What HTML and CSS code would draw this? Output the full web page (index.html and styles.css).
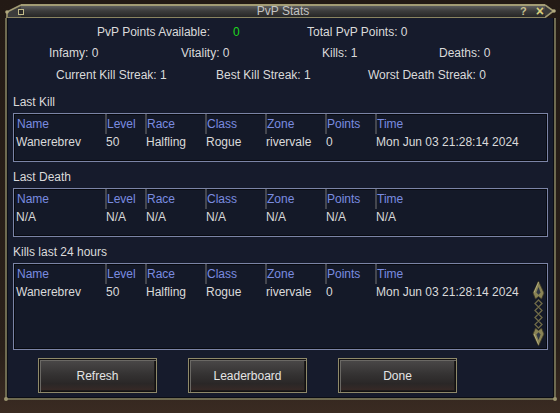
FILE: index.html
```html
<!DOCTYPE html>
<html lang="en">

<head>
    <meta charset="UTF-8">
    <meta name="viewport" content="width=device-width, initial-scale=1.0">
    <title>PvP Stats</title>
    <link rel="stylesheet" href="styles.css">
</head>

<body>
    <div class="window">
        <div class="titlebar">
            <svg class="cap" width="16" height="14" viewBox="0 0 16 14">
                <polygon points="16,1.5 3,8 3,14 16,14" fill="#3c3c3c" />
                <polyline points="16,1 2,8 2,14" fill="none" stroke="#a39c74" stroke-width="1.6" />
                <line x1="3" y1="13.5" x2="16" y2="13.5" stroke="#8a8462" stroke-width="1" />
                <circle cx="2" cy="8" r="1.8" fill="#b3ab80" />
            </svg>
            <div class="bar">
                <span class="knob"></span>
                <span class="title">PvP Stats</span>
                <span class="help">?</span>
                <span class="close">&times;</span>
            </div>
            <svg class="cap" width="11" height="14" viewBox="0 0 11 14">
                <polygon points="0,1.5 8,7 0,13" fill="#3a3a3a" />
                <polyline points="0,1 8.5,7 0,13.5" fill="none" stroke="#a39c74" stroke-width="1.6" />
                <circle cx="9" cy="7" r="1.8" fill="#b3ab80" />
            </svg>
        </div>

        <div class="panel">
            <div class="summary">
                <div class="stat-row row-1">
                    <span class="w136">PvP Points Available:</span>
                    <span class="w74 green">0</span>
                    <span>Total PvP Points: 0</span>
                </div>
                <div class="stat-row row-2">
                    <span class="w132">Infamy: 0</span>
                    <span class="w141">Vitality: 0</span>
                    <span class="w117">Kills: 1</span>
                    <span>Deaths: 0</span>
                </div>
                <div class="stat-row row-3">
                    <span class="w160">Current Kill Streak: 1</span>
                    <span class="w152">Best Kill Streak: 1</span>
                    <span>Worst Death Streak: 0</span>
                </div>
            </div>

            <div class="section">
                <div class="section-label">Last Kill</div>
                <div class="list">
                    <div class="list-table">
                        <div class="list-head">
                            <span>Name</span><span>Level</span><span>Race</span><span>Class</span><span>Zone</span><span>Points</span><span>Time</span>
                        </div>
                        <div class="list-row">
                            <span>Wanerebrev</span><span>50</span><span>Halfling</span><span>Rogue</span><span>rivervale</span><span>0</span><span>Mon Jun 03 21:28:14 2024</span>
                        </div>
                    </div>
                </div>
            </div>

            <div class="section">
                <div class="section-label">Last Death</div>
                <div class="list">
                    <div class="list-table">
                        <div class="list-head">
                            <span>Name</span><span>Level</span><span>Race</span><span>Class</span><span>Zone</span><span>Points</span><span>Time</span>
                        </div>
                        <div class="list-row">
                            <span>N/A</span><span>N/A</span><span>N/A</span><span>N/A</span><span>N/A</span><span>N/A</span><span>N/A</span>
                        </div>
                    </div>
                </div>
            </div>

            <div class="section">
                <div class="section-label">Kills last 24 hours</div>
                <div class="list list-tall">
                    <div class="list-table">
                        <div class="list-head">
                            <span>Name</span><span>Level</span><span>Race</span><span>Class</span><span>Zone</span><span>Points</span><span>Time</span>
                        </div>
                        <div class="list-row">
                            <span>Wanerebrev</span><span>50</span><span>Halfling</span><span>Rogue</span><span>rivervale</span><span>0</span><span>Mon Jun 03 21:28:14 2024</span>
                        </div>
                    </div>
                    <div class="scroll">
                        <svg width="13" height="65" viewBox="0 0 13 65">
                            <!-- up arrow -->
                            <polygon points="6.5,0 12,12 9.5,18 6.5,15.5 3.5,18 1,12" fill="#8a8456" stroke="#3e3a26" stroke-width="0.8" />
                            <polygon points="6.5,6 8.6,11.5 6.5,13.8 4.4,11.5" fill="#2f3744" />
                            <line x1="6.5" y1="1" x2="2" y2="11.5" stroke="#c2bb8a" stroke-width="0.8" />
                            <!-- chain -->
                            <path d="M6.5,19 L10,22.5 L6.5,26 L3,22.5 Z M6.5,26 L10,29.5 L6.5,33 L3,29.5 Z M6.5,33 L10,36.5 L6.5,40 L3,36.5 Z M6.5,40 L10,43.5 L6.5,47 L3,43.5 Z" fill="none" stroke="#6f6a48" stroke-width="1.3" />
                            <!-- down arrow -->
                            <polygon points="6.5,65 12,53 9.5,47 6.5,49.5 3.5,47 1,53" fill="#8a8456" stroke="#3e3a26" stroke-width="0.8" />
                            <polygon points="6.5,59 8.6,53.5 6.5,51.2 4.4,53.5" fill="#2f3744" />
                            <line x1="2" y1="53" x2="6.5" y2="63.5" stroke="#c2bb8a" stroke-width="0.8" />
                        </svg>
                    </div>
                </div>
            </div>

            <div class="buttons">
                <button class="btn">Refresh</button>
                <button class="btn">Leaderboard</button>
                <button class="btn">Done</button>
            </div>
        </div>
    </div>
</body>

</html>
```

FILE: styles.css
```css
:root {
    --gold: #a39c74;
    --gold-dark: #6e6a50;
    --panel: #161b2c;
    --text: #dadada;
    --header: #7a8ce0;
}

body {
    margin: 0;
    height: 413px;
    overflow: hidden;
    font-family: 'Liberation Sans', Arial, sans-serif;
    font-size: 12px;
    color: var(--text);
    background: linear-gradient(#231a15, #2a201a 85%, #3a2b22);
}

.window {
    width: 551px;
    margin: 4px 0 0 5px;
}

/* title bar */
.titlebar {
    display: flex;
    height: 14px;
}

.cap {
    display: block;
    flex: none;
}

.bar {
    flex: 1;
    display: flex;
    align-items: center;
    box-sizing: border-box;
    border-top: 2px solid var(--gold);
    border-bottom: 1px solid #8a8462;
    background: linear-gradient(#5e5e5e, #3c3c3c 45%, #262626);
    line-height: 11px;
}

.knob {
    width: 4px;
    height: 4px;
    margin-left: -3px;
    border: 1px solid #c2ba88;
    background: #2a2a2a;
}

.title {
    flex: 1;
    padding-left: 22px;
    text-align: center;
    color: #c4c4c4;
}

.help {
    color: #c6bf90;
    font-size: 11px;
    font-weight: bold;
    margin-right: 9px;
}

.close {
    color: #d8cf7c;
    font-size: 14px;
    font-weight: bold;
    margin-right: 1px;
}

/* main panel */
.panel {
    position: relative;
    box-sizing: border-box;
    height: 382px;
    border: 2px solid var(--gold-dark);
    border-top: none;
    background: var(--panel);
    box-shadow: inset 1px 0 0 #0b0d15, inset -1px 0 0 #0b0d15, inset 0 -1px 0 #0b0d15;
}

.panel::before,
.panel::after {
    content: "";
    position: absolute;
    bottom: -3px;
    width: 4px;
    height: 4px;
    border-radius: 50%;
    background: #9c9570;
}

.panel::before {
    left: -3px;
}

.panel::after {
    right: -3px;
}

.summary {
    padding: 4px 0 1px;
    height: 64px;
}

.stat-row {
    display: flex;
    line-height: 21px;
    white-space: nowrap;
}

.row-1 {
    padding-left: 90px;
}

.row-2 {
    padding-left: 42px;
}

.row-3 {
    padding-left: 49px;
    margin-top: 1px;
}

.w74 { width: 74px; }
.w117 { width: 117px; }
.w132 { width: 132px; }
.w136 { width: 136px; }
.w141 { width: 141px; }
.w152 { width: 152px; }
.w160 { width: 160px; }

.green {
    color: #1ed81e;
}

/* sections */
.section {
    padding: 0 6px;
}

.section-label {
    margin-top: 7px;
    line-height: 16px;
}

.list {
    display: flex;
    box-sizing: border-box;
    height: 49px;
    margin-top: 3px;
    border: 1px solid #7b84a6;
    background: #141928;
    box-shadow: inset 0 0 0 1px #07090f;
}

.list-tall {
    height: 87px;
}

.list-table {
    flex: 1;
}

.list-head,
.list-row {
    display: grid;
    grid-template-columns: 91px 40px 60px 60px 60px 50px 1fr;
    white-space: nowrap;
}

.list-head {
    line-height: 19px;
    color: var(--header);
}

.list-head span {
    padding-top: 1px;
    border-left: 2px solid #45474f;
}

.list-head span:first-child {
    border-left: none;
    padding-left: 3px;
}

.list-row {
    line-height: 17px;
}

.list-row span {
    padding-left: 1px;
}

.list-row span:first-child {
    padding-left: 2px;
}

.scroll {
    width: 15px;
    padding-top: 17px;
}

.scroll svg {
    display: block;
}

/* buttons */
.buttons {
    display: flex;
    gap: 31px;
    padding-left: 31px;
    margin-top: 8px;
}

.btn {
    width: 119px;
    height: 35px;
    padding: 0;
    border: 1px solid #8e896a;
    background: linear-gradient(#4c4a4a, #353333 45%, #2a2727 75%, #3a2a26);
    box-shadow: inset 1px 1px 0 #121010, inset 2px 2px 0 #6a6864, inset -1px -1px 0 #121010, inset -2px -2px 0 #1e1c1c;
    font-family: 'Liberation Sans', Arial, sans-serif;
    font-size: 12px;
    color: #e4e4e4;
    cursor: pointer;
}
```
